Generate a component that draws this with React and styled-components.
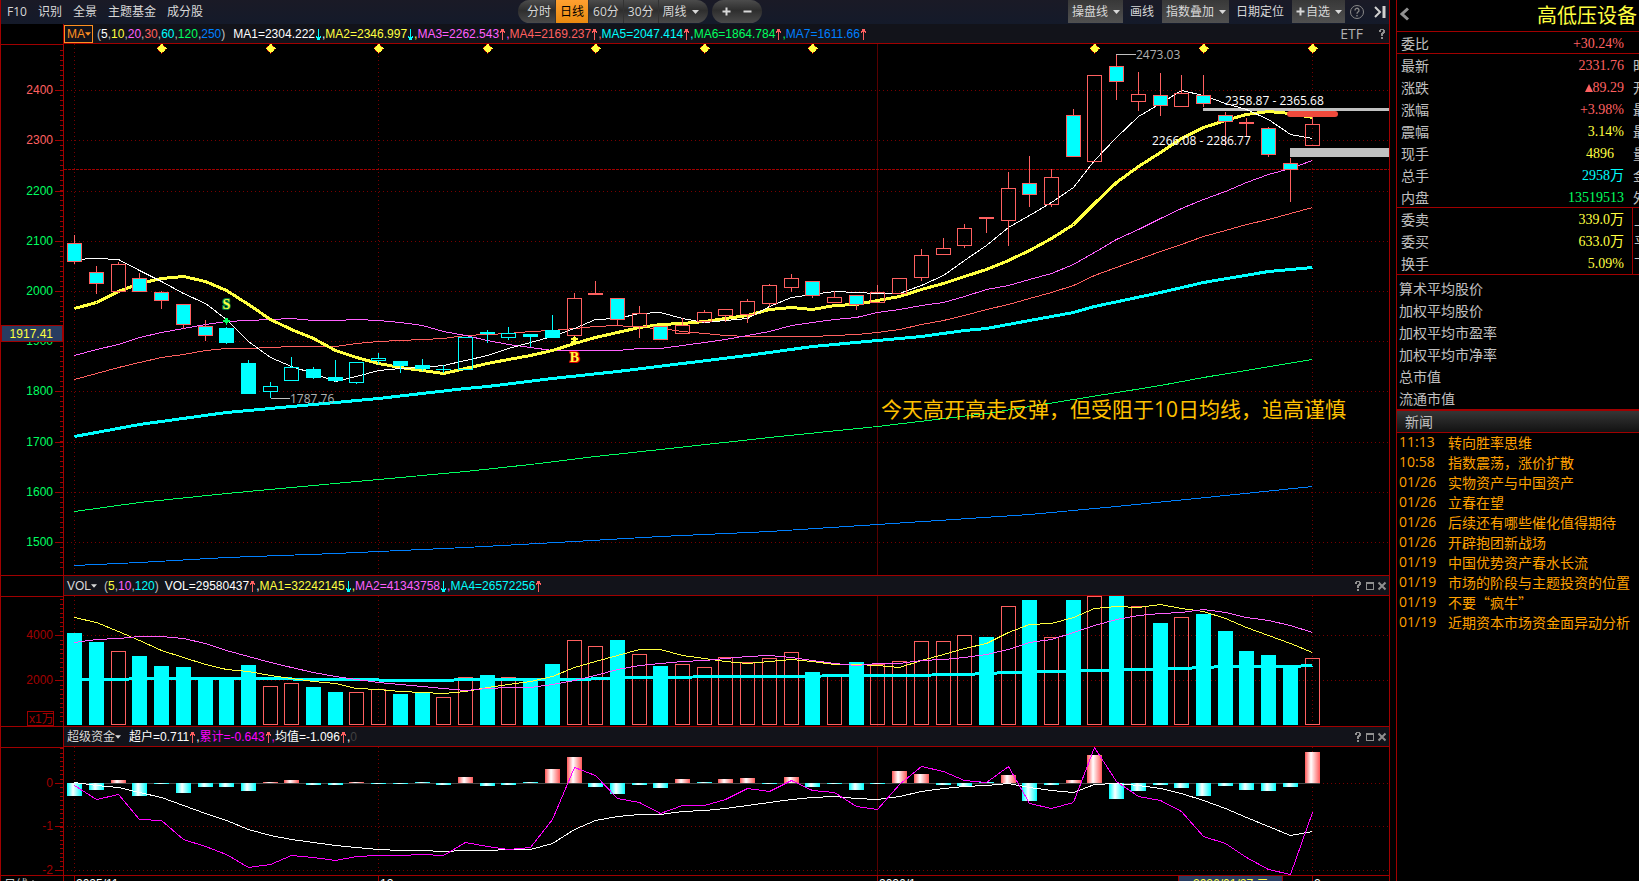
import React from 'react';
import styled, { createGlobalStyle } from 'styled-components';

const RED = '#a00000';
const UP = '#ff6060';
const CYAN = '#00ffff';
const YELLOW = '#ffff40';
const PINK = '#ff60ff';
const GREEN = '#00ff60';
const BLUE = '#0080ff';
const GREY = '#c0c0c0';

const GlobalStyle = createGlobalStyle`
  * {
    box-sizing: border-box;
  }
  body {
    margin: 0;
    background: #000;
    overflow: hidden;
  }
  button {
    font: inherit;
    color: inherit;
    background: none;
    border: 0;
    padding: 0;
    cursor: pointer;
  }
`;

const Page = styled.div`
  display: flex;
  gap: 6px;
  height: 100vh;
  overflow: hidden;
  background: #000;
  color: ${GREY};
  font: 12px/16px 'Open Sans', 'Noto Sans CJK SC', sans-serif;
`;

const Main = styled.main`
  flex: 1;
  min-width: 0;
  border-left: 1px solid ${RED};
  border-right: 1px solid ${RED};
`;

/* ---------- toolbar ---------- */

const Toolbar = styled.header`
  display: flex;
  height: 24px;
  background: linear-gradient(#1a1a26, #141a2a);
  color: #d8d8d8;
  white-space: nowrap;
`;

const NavGroup = styled.nav`
  display: flex;
  align-items: center;
  gap: 11px;
  flex: 0 0 517px;
  padding-left: 6px;
`;

const NavLink = styled.a`
  color: inherit;
  text-decoration: none;
`;

const Pill = styled.div`
  display: flex;
  height: 23px;
  margin-right: 4px;
  border-radius: 12px;
  overflow: hidden;
  background: linear-gradient(#4c4c4c, #2e2e2e 45%, #4a4a4a);
`;

const Period = styled.button`
  display: flex;
  align-items: center;
  gap: 5px;
  padding: 0 ${props => (props.$last ? 8 : 4)}px 0 ${props => (props.$first ? 9 : 4)}px;
  color: ${props => (props.$active ? '#000' : '#d8d8d8')};
  background: ${props => (props.$active ? 'linear-gradient(#ffa030, #e88a10)' : 'none')};
  border-right: 1px solid ${props => (props.$last ? 'transparent' : '#333')};
`;

const Zoom = styled.button`
  display: flex;
  align-items: center;
  justify-content: center;
  width: 25px;
  &:first-child {
    padding-left: 4px;
  }
  &:last-child {
    padding-right: 4px;
  }
`;

const Tools = styled.div`
  display: flex;
  align-items: center;
  height: 23px;
  margin-left: auto;
  padding-right: 2px;
`;

const Tool = styled.button`
  display: flex;
  align-items: center;
  gap: ${props => (props.$boxed ? 5 : 0)}px;
  height: 23px;
  padding: ${props => (props.$boxed ? '0 3px 0 4px' : '0 8px 0 7px')};
  background: ${props => (props.$boxed ? 'linear-gradient(#383838, #505050)' : 'none')};
`;

const AddLabel = styled.span`
  display: flex;
  align-items: center;
  gap: 1px;
`;

const IconTool = styled.button`
  display: flex;
  margin-left: ${props => props.$gap || 0}px;
`;

/* ---------- chart panes ---------- */

const Pane = styled.section`
  display: grid;
  grid-template-columns: 63px 1fr;
  border-bottom: ${props => (props.$open ? 'none' : `1px solid ${RED}`)};
`;

const AxisCell = styled.div`
  border-right: 1px solid ${RED};
`;

const AxisHead = styled.div`
  height: 20px;
`;

const PaneBody = styled.div`
  min-width: 0;
`;

const PaneHead = styled.div`
  display: flex;
  align-items: center;
  height: 20px;
  padding-right: 2px;
  border-bottom: 1px solid ${RED};
  background: #12131a;
  font-family: 'Liberation Sans', 'Noto Sans CJK SC', sans-serif;
  white-space: nowrap;
`;

const Indicator = styled.button`
  display: flex;
  align-items: center;
  height: 18px;
  padding: 0 1px 0 2px;
  border: 1px solid ${props => (props.$active ? '#ff9020' : 'transparent')};
  color: ${props => (props.$active ? '#ff9020' : '#d8d8d8')};
`;

const Readout = styled.span`
  display: inline-flex;
  align-items: center;
  margin-left: ${props => props.$gap || 0}px;
  color: ${props => props.color};
`;

const HeadTools = styled.div`
  display: flex;
  align-items: center;
  gap: ${props => props.$gap || 2}px;
  margin-left: auto;
  color: #909090;
`;

const HeadButton = styled.button`
  display: flex;
`;

const Etf = styled.a`
  color: #b0b0b0;
  font: 14px/18px 'Open Sans', sans-serif;
  text-decoration: none;
`;

const Svg = styled.svg`
  display: block;
  width: 100%;
  height: ${props => props.$h}px;
  font-family: 'Liberation Sans', 'Noto Sans CJK SC', sans-serif;
  font-size: 12px;
`;

const Note = styled.text`
  font-family: 'Open Sans', 'Noto Sans CJK SC', sans-serif;
  font-size: ${props => props.$size || 12}px;
`;

const Marker = styled.text`
  font-family: 'Liberation Serif', serif;
  font-size: 14px;
  font-weight: bold;
  text-anchor: middle;
  paint-order: stroke;
`;

/* ---------- quote panel ---------- */

const Side = styled.aside`
  flex: 0 0 243px;
  overflow: hidden;
  border-left: 1px solid ${RED};
  font-size: 14px;
  white-space: nowrap;
`;

const Title = styled.div`
  display: flex;
  align-items: center;
  justify-content: space-between;
  height: 32px;
  padding: 0 2px 0 3px;
  border-bottom: 1px solid ${RED};
`;

const Name = styled.h1`
  margin: 0;
  color: ${YELLOW};
  font-size: 20px;
  font-weight: 400;
  line-height: 30px;
`;

const Quotes = styled.table`
  width: 100%;
  table-layout: fixed;
  border-collapse: separate;
  border-spacing: 0;
  line-height: 18px;
`;

const QuoteRow = styled.tr`
  height: 22px;
  th,
  td {
    border-bottom: ${props => (props.$line ? `1px solid ${RED}` : 'none')};
  }
  &:last-child {
    height: 23px;
  }
`;

const Label = styled.th`
  width: 60px;
  padding: 2px 0 0 4px;
  font-weight: 400;
  text-align: left;
`;

const Value = styled.td`
  padding: 2px ${props => (props.$inset ? 18 : 8)}px 0 0;
  color: ${props => props.color};
  font-family: 'Liberation Serif', 'Noto Sans CJK SC', serif;
  text-align: right;
`;

const Next = styled.td`
  width: 7px;
  padding: 2px 0 0 1px;
  overflow: hidden;
  border-left: ${props => (props.$rule ? `1px solid ${RED}` : 'none')};
`;

const Averages = styled.ul`
  height: 134px;
  margin: 0;
  padding: 3px 0 0 2px;
  list-style: none;
  line-height: 22px;
`;

const NewsHead = styled.h2`
  height: 24px;
  margin: 0;
  padding-left: 8px;
  border-top: 2px solid ${RED};
  border-bottom: 1px solid ${RED};
  background: linear-gradient(#363636, #121212);
  font-size: 14px;
  font-weight: 400;
  line-height: 21px;
`;

const NewsItem = styled.a`
  display: grid;
  grid-template-columns: 49px 1fr;
  height: 20px;
  padding-left: 2px;
  color: #ffa000;
  line-height: 18px;
  text-decoration: none;
`;

const Headline = styled.span`
  font-family: 'Noto Sans CJK SC', sans-serif;
`;

/* ---------- data ---------- */
// kind, body top, body bottom, high, low
// R hollow red, C cyan with red edge, P cyan, H hollow cyan
const candles = `C243,262,235,264 C272,284,266,294 R264,292,262,293 C278,292,273,292 C292,301,291,309
C304,325,304,329 C326,336,320,341 P328,343,327,344 P363,394,360,394 H386,392,382,398
H367,381,357,381 P369,378,367,379 P377,381,360,382 H362,383,362,384 H358,361,353,364
P361,366,361,373 P365,369,359,371 P369,370,365,373 H337,370,337,370 P332,334,330,343
H333,338,327,340 P334,337,334,347 P330,338,315,338 R298,336,293,336 R293,295,281,295
C298,320,298,325 R313,327,306,338 C326,340,326,340 R325,334,318,334 R312,322,310,323
R309,316,309,322 R301,315,299,323 R285,304,284,307 R278,288,274,292 C281,296,281,298
R297,303,291,303 C295,305,295,310 R292,303,285,303 R278,294,278,294 R255,278,249,281
R248,255,238,255 R228,246,224,248 R217,219,217,233 R188,221,172,246 C183,195,156,207
R177,205,169,207 C115,157,109,157 R75,162,75,162 C66,82,54,100 R94,102,72,111
C95,106,73,116 R93,107,75,107 C95,104,75,107 C115,122,112,146 R122,124,118,137
C128,155,127,157 C163,170,158,202 R124,146,117,146`
  .split(/\s+/)
  .map(c => ({ kind: c[0], v: c.slice(1).split(',').map(Number) }));

const nums = s => s.split(' ').map(Number);

const ma5 = nums('259 258 259 270 281 293 303 319 341 357 366 373 381 376 370 368 367 365 360 355 348 342 336 328 319 318 313 312 318 322 320 318 306 297 294 291 292 293 293 285 275 260 245 227 215 202 187 160 137 116 103 90 95 103 109 119 134 138');
const ma10 = nums('308 302 291 283 278 276 281 290 304 319 329 338 350 357 363 367 370 373 368 363 359 355 350 343 337 332 327 324 323 321 318 315 309 307 309 305 304 300 296 289 283 276 269 260 250 238 224 203 182 166 152 138 127 120 114 111 113 117');
const ma20 = nums('355 349 344 337 332 328 324 321 320 319 318 320 320 319 320 322 325 331 335 340 344 347 350 350 350 350 348 348 345 342 339 335 331 325 322 319 317 312 309 305 302 296 289 285 279 273 264 252 239 229 218 208 199 191 182 174 168 160');
const ma30 = nums('379 373 367 362 357 354 350 348 348 347 346 346 346 343 341 340 339 338 335 334 333 331 330 328 326 325 327 328 331 333 335 336 336 336 336 335 334 332 329 324 320 315 309 304 298 292 285 275 267 259 251 244 236 230 224 219 213 207');

// the slow averages hardly bend, so only their turning points are kept
const ma60 = [[0, 436], [3, 424], [7, 412], [12, 402], [14, 398], [18, 388], [19, 386], [22, 378], [25, 371], [28, 363], [31, 355], [34, 346], [37, 340], [39, 336], [41, 330], [42, 328], [44, 320], [46, 312], [47, 306], [50, 292], [52, 282], [55, 271], [57, 267]];
const ma120 = [[0, 511], [3, 502], [7, 493], [10, 487], [14, 479], [18, 471], [21, 464], [24, 456], [27, 449], [32, 437], [37, 426], [42, 413], [46, 399], [50, 385], [52, 377], [57, 359]];
const ma250 = [[0, 565], [3, 562], [7, 557], [12, 553], [18, 547], [23, 541], [27, 536], [32, 531], [37, 524], [44, 514], [48, 506], [53, 495], [57, 486]];

const volumes = 'C633 C642 R651 C656 C666 C667 C677 C678 C665 R686 R683 C687 C692 R692 R689 C694 C693 R697 R677 C675 R677 C681 C664 R640 R646 C640 R654 C666 R664 R667 R657 R662 R658 R652 C672 R676 C662 R664 R661 R641 R641 R635 C637 R606 C600 R637 C600 R596 C596 R606 C623 R617 C614 C631 C651 C655 C666 R658'.split(' ');
const vol5 = nums('617 622 631 640 650 657 664 669 671 675 678 681 683 688 689 691 692 693 691 687 684 681 676 667 661 655 649 649 655 658 661 663 661 659 661 664 664 665 667 660 654 648 643 632 624 623 617 608 606 607 604 608 611 618 627 635 643 652');
const vol10 = nums('642 639 638 636 636 638 643 650 656 662 667 672 676 679 682 684 686 688 690 688 687 687 684 680 675 669 665 663 661 660 658 656 655 657 660 663 665 663 663 660 659 657 654 649 642 639 632 625 619 615 613 612 609 612 617 620 625 632');
const vol120 = [[0, 679], [2, 679], [3, 678], [9, 678], [11, 679], [17, 680], [18, 679], [23, 679], [26, 677], [31, 676], [38, 675], [41, 674], [43, 672], [47, 670], [51, 668], [53, 666], [56, 666], [57, 665]];

const funds = 'C-13 C-7 R3 C-13 C-1 C-10 C-4 C-4 C-8 R1 R3 C-2 C-2 R1 C-1 C-1 C1 C-2 R6 C-3 C-2 C1 R14 R26 C-4 C-11 C-2 C-5 R4 C1 R4 R5 C-1 R6 C-4 C-1 C-7 C-1 R12 R9 C-2 C-3 C1 R8 C-18 C-2 R3 R28 C-16 C-8 C-2 C-5 C-13 C-3 C-7 C-8 C-4 R31'.split(' ');
const fundSum = nums('785 799 794 819 820 839 846 854 867 864 855 857 860 856 855 855 854 855 842 846 849 847 819 767 775 798 802 813 805 805 799 788 791 780 790 792 806 809 784 766 771 780 782 766 803 808 802 747 781 796 800 811 836 843 857 869 874 812');
const fundAvg = nums('782 785 787 792 797 805 813 820 829 835 839 842 845 847 849 850 850 851 850 850 849 849 843 829 820 816 814 814 811 810 808 805 802 799 797 796 798 799 796 791 788 786 785 783 787 790 792 784 783 785 788 793 800 808 817 826 835 831');

const quotes = [
  { label: '委比', value: '+30.24%', color: UP, line: true },
  { label: '最新', value: '2331.76', color: UP, next: '时' },
  { label: '涨跌', value: '89.29', color: UP, next: '开', rise: true },
  { label: '涨幅', value: '+3.98%', color: UP, next: '最' },
  { label: '震幅', value: '3.14%', color: YELLOW, next: '最' },
  { label: '现手', value: '4896', color: YELLOW, next: '量', inset: true },
  { label: '总手', value: '2958万', color: CYAN, next: '金' },
  { label: '内盘', value: '13519513', color: GREEN, next: '外', line: true },
  { label: '委卖', value: '339.0万', color: YELLOW, next: '上', rule: true },
  { label: '委买', value: '633.0万', color: YELLOW, next: '平', rule: true },
  { label: '换手', value: '5.09%', color: YELLOW, next: '下', rule: true, line: true }
];

const averages = ['算术平均股价', '加权平均股价', '加权平均市盈率', '加权平均市净率', '总市值', '流通市值'];

const news = [
  ['11:13', '转向胜率思维'],
  ['10:58', '指数震荡，涨价扩散'],
  ['01/26', '实物资产与中国资产'],
  ['01/26', '立春在望'],
  ['01/26', '后续还有哪些催化值得期待'],
  ['01/26', '开辟抱团新战场'],
  ['01/19', '中国优势资产春水长流'],
  ['01/19', '市场的阶段与主题投资的位置'],
  ['01/19', '不要“疯牛”'],
  ['01/19', '近期资本市场资金面异动分析']
];

/* ---------- drawing helpers ---------- */
// chart coordinates count from the top left of the window, each svg shifts them

const barX = i => Math.round(74.33 + 21.705 * i);

const Line = ({ data, color, width = 1 }) => (
  <polyline
    points={data
      .map((p, i) => (Array.isArray(p) ? p : [i, p]))
      .map(([i, y]) => `${barX(i) + 0.5},${y + 0.5}`)
      .join(' ')}
    fill='none'
    stroke={color}
    strokeWidth={width}
  />
);

const Grid = ({ rows, top, bottom }) => (
  <g stroke='#780000' strokeDasharray='1 3'>
    {rows.map(y => (
      <line key={y} x1='67' x2='4000' y1={y + 0.5} y2={y + 0.5} />
    ))}
    {[0, 14, 57].map(i => (
      <line key={i} x1={barX(i) + 0.5} x2={barX(i) + 0.5} y1={top} y2={bottom} />
    ))}
    <line x1='877.5' x2='877.5' y1={top} y2={bottom} stroke='#580000' strokeDasharray='none' />
  </g>
);

const Candle = ({ i, kind, v: [top, bottom, high, low] }) => {
  const x = barX(i);
  const edge = kind === 'R' || kind === 'C' ? UP : CYAN;
  const fill = kind === 'C' || kind === 'P' ? CYAN : 'none';
  return (
    <g stroke={edge} fill={fill}>
      {high < top && <line x1={x + 0.5} x2={x + 0.5} y1={high} y2={top} />}
      {low > bottom && <line x1={x + 0.5} x2={x + 0.5} y1={bottom} y2={low} />}
      {bottom - top < 2 ? (
        <line x1={x - 7} x2={x + 8} y1={top + 0.5} y2={top + 0.5} />
      ) : (
        <rect x={x - 6.5} y={top + 0.5} width='14' height={bottom - top - 1} />
      )}
    </g>
  );
};

const Axis = ({ top, height, labels, step, from, to, children }) => {
  const ticks = [];
  const zero = labels[0].y;
  for (let n = Math.ceil((from - zero) / step); zero + n * step <= to; n++) {
    ticks.push(Math.round(zero + n * step));
  }
  return (
    <Svg $h={height}>
      <g transform={`translate(-1 ${-top})`} shapeRendering='crispEdges'>
        <g stroke={RED}>
          <line x1='0' x2='63' y1={top + 0.5} y2={top + 0.5} />
          {ticks.map(y => (
            <line key={y} x1='60' x2='63' y1={y + 0.5} y2={y + 0.5} />
          ))}
          {labels.map(l => (
            <line key={l.y} x1='55' x2='63' y1={l.y + 0.5} y2={l.y + 0.5} />
          ))}
        </g>
        {labels.map(l => (
          <text key={l.y} x='53' y={l.y + 4} fill={l.color} textAnchor='end'>
            {l.text}
          </text>
        ))}
        {children}
      </g>
    </Svg>
  );
};

const Caret = ({ width = 7 }) => (
  <svg width={width} height='4' viewBox='0 0 7 4'>
    <path d='M0 0h7L3.500 4z' fill='currentColor' />
  </svg>
);

const Arrow = ({ up }) => (
  <svg width='7' height='12' shapeRendering='crispEdges'>
    <path
      d={up ? 'M3.500 12V1M2.500 1v3M4.500 1v3M1.500 3v2M5.500 3v2' : 'M3.500 1v11M2.500 9v3M4.500 9v3M1.500 8v2M5.500 8v2'}
      stroke={up ? UP : CYAN}
      fill='none'
    />
  </svg>
);

const Series = ({ text, color, up, gap, last }) => (
  <Readout color={color} $gap={gap}>
    {text}
    <Arrow up={up} />
    {!last && ','}
  </Readout>
);

const Params = ({ items, gap }) => (
  <Readout color={GREY} $gap={gap}>
    (
    {items.map(([n, color], i) => (
      <React.Fragment key={n}>
        {i > 0 && ','}
        <Readout color={color}>{n}</Readout>
      </React.Fragment>
    ))}
    )
  </Readout>
);

const HelpIcon = () => (
  <svg width='10' height='12' shapeRendering='crispEdges'>
    <path
      d='M3 1h4v1h1v3h-1v1h-1v2h-2v-3h1v-1h1v-2h-2v2h-2v-2h1zM4 9h2v2h-2z'
      fill='currentColor'
    />
  </svg>
);

const WindowTools = () => (
  <HeadTools>
    <HeadButton aria-label='帮助'>
      <HelpIcon />
    </HeadButton>
    <HeadButton aria-label='最大化'>
      <svg width='10' height='10' shapeRendering='crispEdges'>
        <path d='M1 1h8v8h-8zM2 3v5h6v-5z' fill='currentColor' fillRule='evenodd' />
      </svg>
    </HeadButton>
    <HeadButton aria-label='关闭'>
      <svg width='10' height='10'>
        <path d='M1.500 1.500l7 7M8.500 1.500l-7 7' stroke='currentColor' strokeWidth='2' />
      </svg>
    </HeadButton>
  </HeadTools>
);

const PlusIcon = () => (
  <svg width='9' height='9'>
    <path d='M4.500 0.500v8M0.500 4.500h8' stroke='#d8d8d8' strokeWidth='2' />
  </svg>
);

const TopBar = () => (
  <Toolbar>
    <NavGroup>
      {['F10', '识别', '全景', '主题基金', '成分股'].map(t => (
        <NavLink key={t} href='#'>
          {t}
        </NavLink>
      ))}
    </NavGroup>
    <Pill>
      <Period $first>分时</Period>
      <Period $active>日线</Period>
      <Period>60分</Period>
      <Period>30分</Period>
      <Period $last>
        周线
        <Caret />
      </Period>
    </Pill>
    <Pill>
      <Zoom aria-label='放大'>
        <PlusIcon />
      </Zoom>
      <Zoom aria-label='缩小'>
        <svg width='9' height='9'>
          <path d='M0.500 4.500h8' stroke='#d8d8d8' strokeWidth='2' />
        </svg>
      </Zoom>
    </Pill>
    <Tools>
      <Tool $boxed>
        操盘线
        <Caret />
      </Tool>
      <Tool>画线</Tool>
      <Tool $boxed>
        指数叠加
        <Caret />
      </Tool>
      <Tool>日期定位</Tool>
      <Tool $boxed>
        <AddLabel>
          <PlusIcon />
          自选
        </AddLabel>
        <Caret />
      </Tool>
      <IconTool aria-label='帮助' $gap={4}>
        <svg width='16' height='16' fill='none' stroke='#888'>
          <circle cx='8' cy='8' r='6.500' />
          <path d='M6 6.500a2 2 0 1 1 3 1.500c-.8.500-1 .8-1 1.800M8 11v1.500' strokeWidth='1.300' />
        </svg>
      </IconTool>
      <IconTool aria-label='收起' $gap={8}>
        <svg width='14' height='12' fill='none' stroke='#d0d0d0' strokeWidth='2'>
          <path d='M2 1l5 5-5 5' />
          <path d='M11 0v12' strokeWidth='3' />
        </svg>
      </IconTool>
    </Tools>
  </Toolbar>
);

const PricePane = () => {
  const labels = [90, 140, 191, 241, 291, 341, 391, 442, 492, 542].map((y, i) => ({
    y,
    text: 2400 - i * 100,
    color: i < 2 ? UP : GREEN
  }));
  return (
    <Pane>
      <AxisCell>
        <AxisHead />
        <Axis top={44} height={531} labels={labels} step={5.02} from={46} to={568}>
          <rect x='1.500' y='325.500' width='61' height='16' fill='#283c60' stroke={RED} />
          <text x='53' y='338' fill={YELLOW} textAnchor='end'>
            1917.41
          </text>
        </Axis>
      </AxisCell>
      <PaneBody>
        <PaneHead>
          <Indicator $active>
            MA
            <Caret width={6} />
          </Indicator>
          <Params
            gap={4}
            items={[['5', '#fff'], ['10', YELLOW], ['20', PINK], ['30', UP], ['60', CYAN], ['120', GREEN], ['250', BLUE]]}
          />
          <Series text='MA1=2304.222' color='#fff' gap={8} />
          <Series text='MA2=2346.997' color={YELLOW} />
          <Series text='MA3=2262.543' color={PINK} up />
          <Series text='MA4=2169.237' color={UP} up />
          <Series text='MA5=2047.414' color={CYAN} up />
          <Series text='MA6=1864.784' color={GREEN} up />
          <Series text='MA7=1611.66' color={BLUE} up last />
          <HeadTools $gap={14}>
            <Etf href='#'>ETF</Etf>
            <HeadButton aria-label='帮助'>
              <HelpIcon />
            </HeadButton>
          </HeadTools>
        </PaneHead>
        <Svg $h={531}>
          <g transform='translate(-64 -44)' shapeRendering='crispEdges'>
            <Grid rows={labels.map(l => l.y)} top={44} bottom={575} />
            <line x1='64' x2='4000' y1='169.500' y2='169.500' stroke={RED} strokeDasharray='3 1' />
            <rect x='1203' y='108' width='3000' height='3' fill={GREY} />
            <rect x='1290' y='148' width='3000' height='9' fill={GREY} />
            <Line data={ma250} color={BLUE} />
            <Line data={ma120} color={GREEN} />
            <Line data={ma60} color={CYAN} width={3} />
            <Line data={ma30} color={UP} />
            <Line data={ma20} color={PINK} />
            <Line data={ma10} color={YELLOW} width={3} />
            <Line data={ma5} color='#fff' />
            {candles.map((c, i) => (
              <Candle key={i} i={i} {...c} />
            ))}
            <rect x='1287' y='111' width='51' height='6' rx='3' fill='#f04a3c' shapeRendering='auto' />
            {[4, 9, 14, 19, 24, 29, 34, 47, 52, 57].map(i => (
              <path
                key={i}
                d={`M${barX(i) + 0.5} 43.500l5 5-5 5-5-5z`}
                fill={YELLOW}
                stroke='#c00000'
                strokeDasharray='1 1'
              />
            ))}
            <path d='M271 398.500h19M1116 54.500h20' stroke={GREY} />
            <Note x='290' y='403' fill='#b0b0b0'>
              1787.76
            </Note>
            <Note x='1136' y='59' fill='#b0b0b0'>
              2473.03
            </Note>
            <Note x='1225' y='105' fill='#fff'>
              2358.87 - 2365.68
            </Note>
            <Note x='1152' y='145' fill='#fff'>
              2266.08 - 2286.77
            </Note>
            <Note x='881' y='417' fill='#ffc000' $size={21}>
              今天高开高走反弹，但受阻于10日均线，追高谨慎
            </Note>
            <path d='M225 318h3v2h2v2h-2v1h-1v2h-1v-2h-1v-1h-2v-2h2z' fill={GREEN} />
            <Marker x='226.500' y='309' fill={YELLOW} stroke='#008040' strokeWidth='2'>
              S
            </Marker>
            <path d='M574 336h1v1h1v1h2v2h-2v1h2v2h-7v-2h2v-1h-2v-2h2v-1h1z' fill={YELLOW} />
            <Marker x='574.500' y='362' fill={YELLOW} stroke='#e00000' strokeWidth='2'>
              B
            </Marker>
          </g>
        </Svg>
      </PaneBody>
    </Pane>
  );
};

const VolumePane = () => (
  <Pane>
    <AxisCell>
      <AxisHead />
      <Axis
        top={596}
        height={130}
        labels={[{ y: 635, text: '4000', color: RED }, { y: 680, text: '2000', color: RED }]}
        step={4.5}
        from={598}
        to={723}
      >
        <rect x='27.500' y='711.500' width='26' height='14' fill='none' stroke={RED} />
        <text x='29' y='723' fill={RED}>
          x1万
        </text>
      </Axis>
    </AxisCell>
    <PaneBody>
      <PaneHead>
        <Indicator>
          VOL
          <Caret width={6} />
        </Indicator>
        <Params gap={5} items={[['5', YELLOW], ['10', PINK], ['120', CYAN]]} />
        <Series text='VOL=29580437' color='#fff' up gap={6} />
        <Series text='MA1=32242145' color={YELLOW} />
        <Series text='MA2=41343758' color={PINK} />
        <Series text='MA4=26572256' color={CYAN} up last />
        <WindowTools />
      </PaneHead>
      <Svg $h={130}>
        <g transform='translate(-64 -596)' shapeRendering='crispEdges'>
          <Grid rows={[635, 680]} top={596} bottom={726} />
          {volumes.map((v, i) => {
            const y = Number(v.slice(1));
            return (
              <rect
                key={i}
                x={barX(i) - 6.5}
                y={y + 0.5}
                width='14'
                height={724 - y}
                fill={v[0] === 'C' ? CYAN : 'none'}
                stroke={v[0] === 'C' ? CYAN : UP}
              />
            );
          })}
          <Line data={vol120} color={CYAN} width={3} />
          <Line data={vol5} color={YELLOW} />
          <Line data={vol10} color={PINK} />
        </g>
      </Svg>
    </PaneBody>
  </Pane>
);

const FundPane = () => (
  <Pane>
    <AxisCell>
      <AxisHead />
      <Axis
        top={747}
        height={128}
        labels={[
          { y: 783, text: '0', color: RED },
          { y: 826, text: '-1', color: RED },
          { y: 870, text: '-2', color: RED }
        ]}
        step={4.35}
        from={748}
        to={874}
      />
    </AxisCell>
    <PaneBody>
      <PaneHead>
        <Indicator>
          超级资金
          <Caret width={6} />
        </Indicator>
        <Series text='超户=0.711' color='#fff' up gap={6} />
        <Series text='累计=-0.643' color='#ff00ff' up />
        <Series text='均值=-1.096' color='#fff' up />
        <Readout color='#404040'>0</Readout>
        <WindowTools />
      </PaneHead>
      <Svg $h={128}>
        <defs>
          <linearGradient id='fund-in'>
            <stop offset='0' stopColor='#ff5858' />
            <stop offset='0.4' stopColor='#fff' />
            <stop offset='1' stopColor='#ff5858' />
          </linearGradient>
          <linearGradient id='fund-out'>
            <stop offset='0' stopColor={CYAN} />
            <stop offset='0.4' stopColor='#fff' />
            <stop offset='1' stopColor={CYAN} />
          </linearGradient>
        </defs>
        <g transform='translate(-64 -747)' shapeRendering='crispEdges'>
          <Grid rows={[783, 826, 870]} top={747} bottom={875} />
          <line x1='67' x2='1320' y1='783.500' y2='783.500' stroke='#484848' />
          {funds.map((f, i) => {
            const h = Number(f.slice(1));
            return (
              <rect
                key={i}
                x={barX(i) - 7}
                y={h > 0 ? 783 - h : 783}
                width='15'
                height={Math.abs(h)}
                fill={f[0] === 'R' ? 'url(#fund-in)' : 'url(#fund-out)'}
              />
            );
          })}
          <Line data={fundAvg} color='#fff' />
          <Line data={fundSum} color='#ff00ff' />
        </g>
      </Svg>
    </PaneBody>
  </Pane>
);

const DatePane = () => (
  <Pane $open>
    <AxisCell>
      <Svg $h={18}>
        <text x='3' y='13' fill={GREY}>
          日线
        </text>
        <path d='M29 7l3-3 3 3z' fill={GREY} />
      </Svg>
    </AxisCell>
    <Svg $h={18}>
      <g transform='translate(-64 0)'>
        <path d='M74.500 0v18M378.500 0v18M877.500 0v18M1312.500 0v18' stroke={RED} />
        <g fill='#fff'>
          <text x='76' y='12'>2025/11</text>
          <text x='380' y='12'>12</text>
          <text x='879' y='12'>2026/1</text>
          <text x='1314' y='12'>2</text>
        </g>
        <rect x='1178.500' y='-1' width='104' height='18' fill='#283c60' stroke={RED} />
        <text x='1193' y='12' fill={YELLOW}>
          2026/01/27 二
        </text>
      </g>
    </Svg>
  </Pane>
);

const QuotePanel = () => (
  <Side>
    <Title>
      <button aria-label='返回'>
        <svg width='10' height='14'>
          <path d='M8 1.500L2 7l6 5.500' fill='none' stroke='#909090' strokeWidth='3' />
        </svg>
      </button>
      <Name>高低压设备</Name>
    </Title>
    <Quotes>
      <tbody>
        {quotes.map(q => (
          <QuoteRow key={q.label} $line={q.line}>
            <Label scope='row'>{q.label}</Label>
            <Value color={q.color} $inset={q.inset}>
              {q.rise && (
                <svg width='8' height='8'>
                  <path d='M4 0l4 8h-8z' fill={UP} />
                </svg>
              )}
              {q.value}
            </Value>
            <Next $rule={q.rule}>{q.next}</Next>
          </QuoteRow>
        ))}
      </tbody>
    </Quotes>
    <Averages>
      {averages.map(a => (
        <li key={a}>{a}</li>
      ))}
    </Averages>
    <NewsHead>新闻</NewsHead>
    {news.map(([time, title]) => (
      <NewsItem key={title} href='#'>
        <time>{time}</time>
        <Headline>{title}</Headline>
      </NewsItem>
    ))}
  </Side>
);

const App = () => (
  <>
    <GlobalStyle />
    <Page>
      <Main>
        <TopBar />
        <PricePane />
        <VolumePane />
        <FundPane />
        <DatePane />
      </Main>
      <QuotePanel />
    </Page>
  </>
);

export default App;
